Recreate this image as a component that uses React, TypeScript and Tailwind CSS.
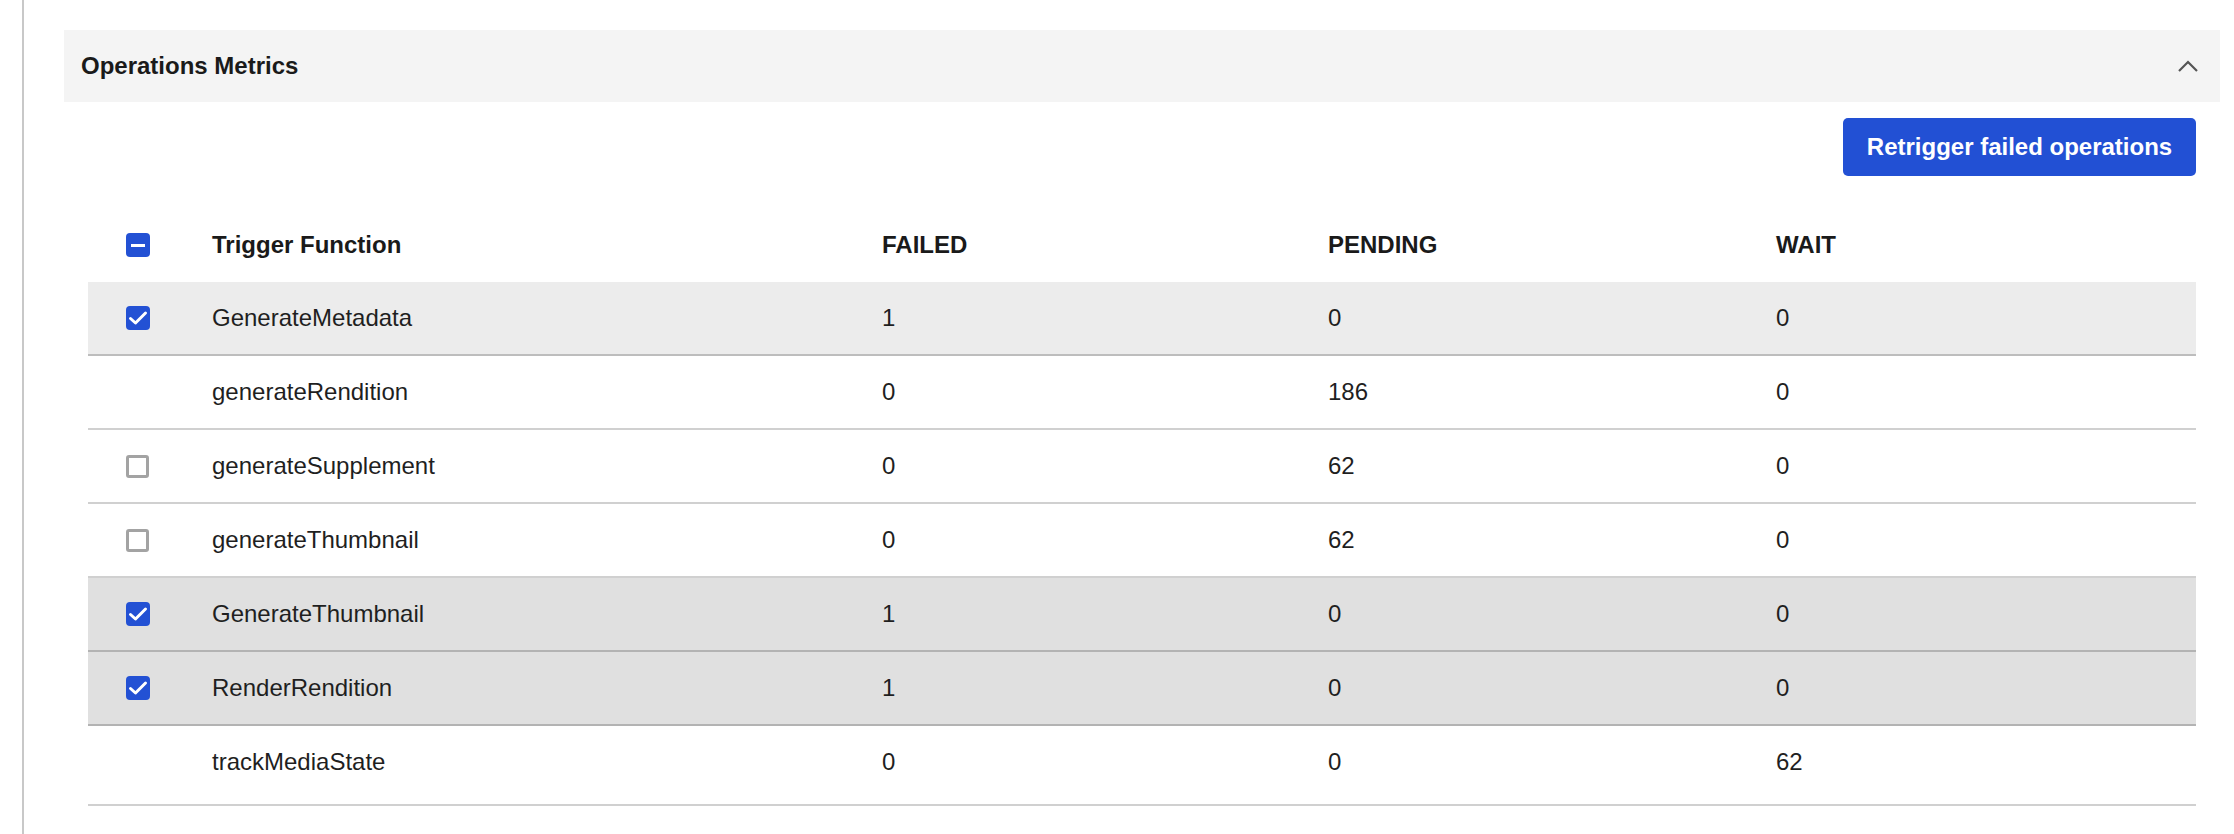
import React from "react";

type Row = {
  name: string;
  failed: number;
  pending: number;
  wait: number;
  box: "checked" | "unchecked" | "none";
  bg: string;
  border: string;
  last?: boolean;
};

const rows: Row[] = [
  { name: "GenerateMetadata", failed: 1, pending: 0, wait: 0, box: "checked", bg: "bg-[#ececec]", border: "border-[#bdbdbd]" },
  { name: "generateRendition", failed: 0, pending: 186, wait: 0, box: "none", bg: "bg-white", border: "border-[#d0d0d0]" },
  { name: "generateSupplement", failed: 0, pending: 62, wait: 0, box: "unchecked", bg: "bg-white", border: "border-[#d0d0d0]" },
  { name: "generateThumbnail", failed: 0, pending: 62, wait: 0, box: "unchecked", bg: "bg-white", border: "border-[#d0d0d0]" },
  { name: "GenerateThumbnail", failed: 1, pending: 0, wait: 0, box: "checked", bg: "bg-[#e0e0e0]", border: "border-[#b3b3b3]" },
  { name: "RenderRendition", failed: 1, pending: 0, wait: 0, box: "checked", bg: "bg-[#e0e0e0]", border: "border-[#b3b3b3]" },
  { name: "trackMediaState", failed: 0, pending: 0, wait: 62, box: "none", bg: "bg-white", border: "border-[#d0d0d0]", last: true },
];

function CheckedBox() {
  return (
    <div className="w-[24px] h-[24px] rounded-[4px] bg-[#2351d4] flex items-center justify-center">
      <svg width="24" height="24" viewBox="0 0 24 24" fill="none">
        <path d="M4.5 12.5 L9.5 17 L19.5 7" stroke="white" strokeWidth="3" strokeLinecap="round" strokeLinejoin="round" />
      </svg>
    </div>
  );
}

function IndeterminateBox() {
  return (
    <div className="w-[24px] h-[24px] rounded-[4px] bg-[#2351d4] flex items-center justify-center">
      <div className="w-[14px] h-[3px] bg-white" />
    </div>
  );
}

function UncheckedBox() {
  return <div className="w-[23px] h-[23px] rounded-[3px] border-[3px] border-[#a3a3a3] bg-white" />;
}

export default function App() {
  return (
    <div
      className="w-[2234px] h-[834px] bg-white flex text-[#1f1f1f] overflow-hidden"
      style={{ fontFamily: '"Liberation Sans", Arial, Helvetica, sans-serif' }}
    >
      <div className="ml-[22px] w-[2px] h-full bg-[#c8c8c8]" />
      <div className="ml-[40px] w-[2156px] pt-[30px]">
        <div className="h-[72px] bg-[#f4f4f4] flex items-center justify-between pl-[17px] pr-[22px]">
          <span className="text-[24px] font-bold text-[#1a1a1a]">Operations Metrics</span>
          <svg width="20" height="12" viewBox="0 0 20 12" fill="none">
            <path d="M1 11 L10 2 L19 11" stroke="#555" strokeWidth="2.2" />
          </svg>
        </div>
        <div className="px-[24px]">
          <div className="flex justify-end mt-[16px]">
            <button className="h-[58px] w-[353px] rounded-[5px] bg-[#2250d4] text-white text-[24px] font-bold flex items-center justify-center">
              Retrigger failed operations
            </button>
          </div>
          <div className="mt-[32px]">
            <div className="flex items-center h-[74px] text-[24px] font-bold text-[#1a1a1a]">
              <div className="w-[124px] pl-[38px]">
                <IndeterminateBox />
              </div>
              <div className="w-[670px]">Trigger Function</div>
              <div className="w-[446px]">FAILED</div>
              <div className="w-[448px]">PENDING</div>
              <div className="flex-1">WAIT</div>
            </div>
            {rows.map((r) => (
              <div
                key={r.name}
                className={`flex items-start border-b-2 text-[24px] ${r.bg} ${r.border} ${r.last ? "h-[80px] pt-[22px]" : "h-[74px] pt-[22px]"}`}
              >
                <div className="w-[124px] pl-[38px] h-[28px] flex items-center">
                  {r.box === "checked" && <CheckedBox />}
                  {r.box === "unchecked" && <UncheckedBox />}
                </div>
                <div className="w-[670px] leading-[28px]">{r.name}</div>
                <div className="w-[446px] leading-[28px]">{r.failed}</div>
                <div className="w-[448px] leading-[28px]">{r.pending}</div>
                <div className="flex-1 leading-[28px]">{r.wait}</div>
              </div>
            ))}
          </div>
        </div>
      </div>
    </div>
  );
}
